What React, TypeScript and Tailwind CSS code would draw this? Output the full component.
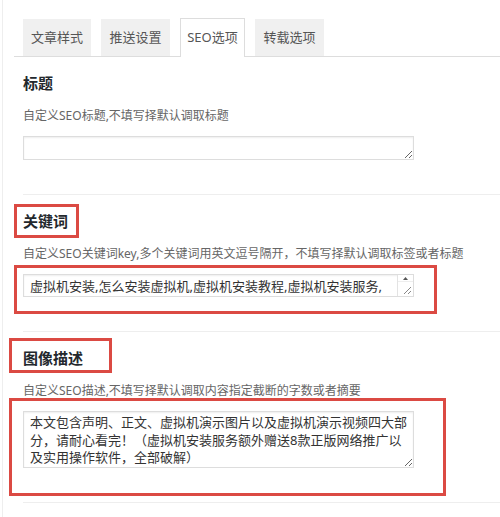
import React from "react";

const tabs = [
  { label: "文章样式", width: "w-[68px]" },
  { label: "推送设置", width: "w-[69px]" },
  { label: "SEO选项", width: "w-[65px]", active: true },
  { label: "转载选项", width: "w-[69px]" },
];

const fieldClass =
  "block w-[391px] border border-[#ddd] bg-white text-[13px] text-[#333] shadow-[inset_0_1px_2px_rgba(0,0,0,0.07)] outline-none";

function Section({
  title,
  hint,
  children,
}: {
  title: string;
  hint: string;
  children: React.ReactNode;
}) {
  return (
    <div className="border-b border-[#eee] pt-4 pb-[34px]">
      <h3 className="text-[15px] leading-5 font-bold text-[#23282d]">{title}</h3>
      <p className="mt-[14px] text-[12px] leading-[18px] text-[#666]">{hint}</p>
      <div className="mt-[11px]">{children}</div>
    </div>
  );
}

export default function App() {
  return (
    <div className="relative w-[500px] h-[517px] overflow-hidden bg-white font-['Noto_Sans','Noto_Sans_CJK_SC',sans-serif]">
      <div className="ml-[2px] h-full border-l border-[#eee] pt-[18px]">
        {/* tabs */}
        <div className="ml-[11px] flex items-end h-[39px] gap-[10px] border-b border-[#ddd] pl-[9px]">
          {tabs.map((t) =>
            t.active ? (
              <div
                key={t.label}
                className={`${t.width} h-[39px] -mb-px flex items-center justify-center border-x border-t border-[#ddd] bg-white text-[13px] text-[#555]`}
              >
                {t.label}
              </div>
            ) : (
              <div
                key={t.label}
                className={`${t.width} h-[37px] flex items-center justify-center bg-[#f0f0f0] text-[13px] text-[#555]`}
              >
                {t.label}
              </div>
            )
          )}
        </div>

        <div className="pl-[20px]">
          <Section title="标题" hint="自定义SEO标题,不填写择默认调取标题">
            <textarea
              readOnly
              className={`${fieldClass} w-[390px] h-[24px] px-[6px] py-[2px] leading-[18px] overflow-hidden`}
            />
          </Section>

          <Section
            title="关键词"
            hint="自定义SEO关键词key,多个关键词用英文逗号隔开，不填写择默认调取标签或者标题"
          >
            <div className="relative w-[391px]">
              <textarea
                readOnly
                defaultValue="虚拟机安装,怎么安装虚拟机,虚拟机安装教程,虚拟机安装服务,"
                className={`${fieldClass} h-[23px] resize-none pl-[6px] pr-[18px] py-[2px] leading-[18px] overflow-hidden whitespace-nowrap`}
              />
              {/* scrollbar stub */}
              <div className="absolute right-px top-px bottom-px w-[16px] border-l border-[#e3e3e3] bg-white">
                <div className="flex justify-center pt-[2px] pb-[1px] border-b border-[#eee]">
                  <svg width="5" height="3" viewBox="0 0 5 3" aria-hidden>
                    <path d="M2.5 0L5 3H0z" fill="#555" />
                  </svg>
                </div>
                <svg
                  className="absolute right-[1px] bottom-[1px]"
                  width="10"
                  height="10"
                  viewBox="0 0 10 10"
                  aria-hidden
                >
                  <path d="M9 2L2 9M9 6L6 9" stroke="#888" strokeWidth="1" />
                </svg>
              </div>
            </div>
          </Section>

          <Section title="图像描述" hint="自定义SEO描述,不填写择默认调取内容指定截断的字数或者摘要">
            <textarea
              readOnly
              defaultValue={
                "本文包含声明、正文、虚拟机演示图片以及虚拟机演示视频四大部\n分，请耐心看完！（虚拟机安装服务额外赠送8款正版网络推广以\n及实用操作软件，全部破解）"
              }
              className={`${fieldClass} h-[57px] pl-[6px] pr-[2px] pt-[2px] pb-0 leading-[17.5px] overflow-hidden`}
            />
          </Section>
        </div>
      </div>

      {/* annotation boxes */}
      <div className="absolute left-[14px] top-[204px] w-[65px] h-[34px] border-[3px] border-[#db4a43]" />
      <div className="absolute left-[14px] top-[265px] w-[423px] h-[49px] border-[3px] border-[#db4a43]" />
      <div className="absolute left-[9px] top-[338px] w-[103px] h-[35px] border-[3px] border-[#db4a43]" />
      <div className="absolute left-[9px] top-[398px] w-[437px] h-[98px] border-[3px] border-[#db4a43]" />
    </div>
  );
}
